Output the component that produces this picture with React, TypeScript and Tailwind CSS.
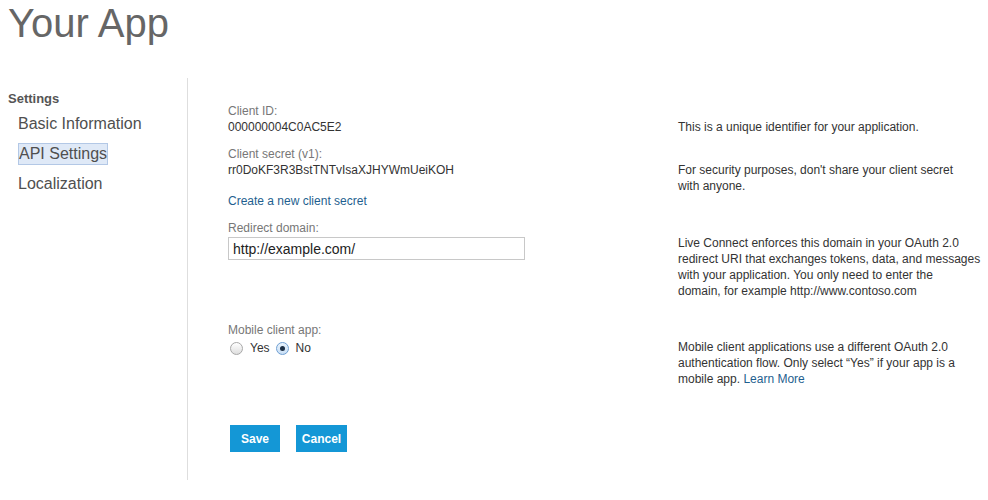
import { useState } from 'react';

const font = { fontFamily: '"Liberation Sans", Arial, sans-serif' };

function Radio({ checked }: { checked: boolean }) {
  return (
    <span
      className={`inline-flex h-[13px] w-[13px] items-center justify-center rounded-full border ${
        checked ? 'border-[#6f9fd3] bg-gradient-to-b from-[#eaf3fc] to-[#c9dff5]' : 'border-[#a8a8a8] bg-gradient-to-b from-white to-[#dedede]'
      }`}
    >
      {checked && <span className="h-[5px] w-[5px] rounded-full bg-[#1d2f45]" />}
    </span>
  );
}

export default function App() {
  const [mobile, setMobile] = useState<'yes' | 'no'>('no');
  const [domain, setDomain] = useState('http://example.com/');

  return (
    <div className="min-h-[500px] w-full bg-white text-[#333]" style={font}>
      <header className="h-[78px] pl-2 pt-[1px]">
        <h1 className="text-[40px] leading-[44px] text-[#666]">Your App</h1>
      </header>

      <div className="flex">
        {/* navegación lateral */}
        <aside className="h-[402px] w-[188px] shrink-0 border-r border-[#dedede] pl-2 pt-[13px]">
          <p className="text-[13px] font-bold leading-4 text-[#555]">Settings</p>
          <ul className="mt-[2px] pl-[10px] text-[16px] leading-[30px] text-[#4f4f4f]">
            <li>Basic Information</li>
            <li>
              <span className="inline-block border border-[#b3c8e6] bg-[#dfe9f7] leading-[20px]">API Settings</span>
            </li>
            <li>Localization</li>
          </ul>
        </aside>

        <main className="pl-10 pt-[25px] text-[12px] leading-4">
          <div className="flex">
            <div className="w-[450px]">
              <p className="text-[#777]">Client ID:</p>
              <p>000000004C0AC5E2</p>
            </div>
            <p className="pt-4">This is a unique identifier for your application.</p>
          </div>

          <div className="mt-[11px] flex">
            <div className="w-[450px]">
              <p className="text-[#777]">Client secret (v1):</p>
              <p>rr0DoKF3R3BstTNTvIsaXJHYWmUeiKOH</p>
              <a href="#" className="mt-[15px] block text-[#1f5f8f]">Create a new client secret</a>
            </div>
            <p className="pt-4">
              For security purposes, don't share your client secret
              <br />
              with anyone.
            </p>
          </div>

          <div className="mt-[11px] flex">
            <div className="w-[450px]">
              <p className="text-[#777]">Redirect domain:</p>
              <input
                value={domain}
                onChange={(e) => setDomain(e.target.value)}
                className="mt-px h-[23px] w-[297px] border border-[#c8c8c8] px-[4px] text-[14px] text-[#222] outline-none"
              />
            </div>
            <p className="pt-[15px]">
              Live Connect enforces this domain in your OAuth 2.0
              <br />
              redirect URI that exchanges tokens, data, and messages
              <br />
              with your application. You only need to enter the
              <br />
              domain, for example http://www.contoso.com
            </p>
          </div>

          <div className="mt-[23px] flex">
            <div className="w-[450px]">
              <p className="text-[#777]">Mobile client app:</p>
              <div className="mt-[2px] flex items-center pl-[2px]">
                <button onClick={() => setMobile('yes')} className="flex items-center gap-[7px]">
                  <Radio checked={mobile === 'yes'} />
                  <span>Yes</span>
                </button>
                <button onClick={() => setMobile('no')} className="ml-[6px] flex items-center gap-[7px]">
                  <Radio checked={mobile === 'no'} />
                  <span>No</span>
                </button>
              </div>
            </div>
            <p className="pt-[17px]">
              Mobile client applications use a different OAuth 2.0
              <br />
              authentication flow. Only select “Yes” if your app is a
              <br />
              mobile app. <a href="#" className="text-[#1f5f8f]">Learn More</a>
            </p>
          </div>

          <div className="ml-[2px] mt-[38px] flex gap-4">
            <button className="h-[27px] w-[50px] bg-[#1497d6] text-[12px] font-bold text-white">Save</button>
            <button className="h-[27px] w-[51px] bg-[#1497d6] text-[12px] font-bold text-white">Cancel</button>
          </div>
        </main>
      </div>
    </div>
  );
}
